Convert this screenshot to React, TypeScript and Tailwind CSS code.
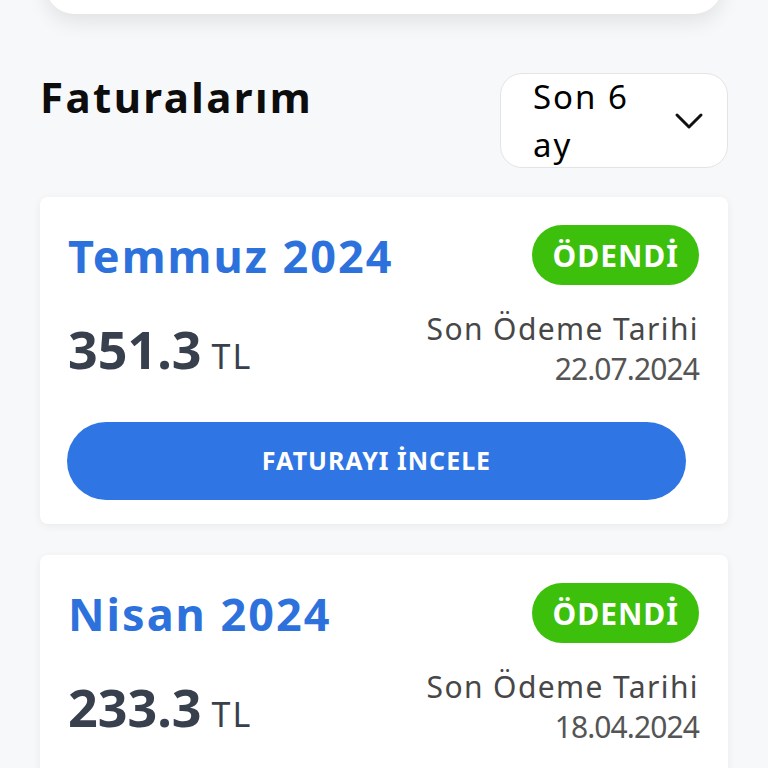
type Invoice = {
  month: string;
  amount: string;
  dueDate: string;
};

const invoices: Invoice[] = [
  { month: "Temmuz 2024", amount: "351.3", dueDate: "22.07.2024" },
  { month: "Nisan 2024", amount: "233.3", dueDate: "18.04.2024" },
];

const InvoiceCard = ({ invoice }: { invoice: Invoice }) => {
  return (
    <div className="bg-white rounded-[8px] shadow-[0_2px_8px_rgba(0,0,0,0.06)] px-[28px] pt-[28px] pb-[24px]">
      {/* Title + status */}
      <div className="flex items-center justify-between pr-[1px]">
        <h3 className="text-[45px] font-bold text-[#2d72dc] leading-none tracking-[2px]">
          {invoice.month}
        </h3>
        <span className="h-[60px] px-[20px] rounded-full bg-[#3cc00b] text-white text-[30px] font-bold tracking-[1px] flex items-center">
          ÖDENDİ
        </span>
      </div>

      {/* Amount + due date */}
      <div className="flex items-center justify-between mt-[24px] pr-[1px]">
        <div className="flex items-baseline gap-[10px] text-[#383f4d]">
          <span className="text-[52px] font-bold">{invoice.amount}</span>
          <span className="text-[34px] tracking-[2px]">TL</span>
        </div>
        <div className="text-right text-[30px] leading-[40px] text-[#474747]">
          <p className="tracking-[1.4px]">Son Ödeme Tarihi</p>
          <p className="text-[#555] tracking-[-0.9px]">{invoice.dueDate}</p>
        </div>
      </div>

      <button className="mt-[33px] w-[619px] h-[78px] rounded-full bg-[#2f76e4] text-white text-[25px] font-bold tracking-[1px] -ml-[1px]">
        FATURAYI İNCELE
      </button>
    </div>
  );
};

export default function App() {
  return (
    <div
      className="h-[768px] overflow-hidden bg-[#f7f8fa]"
      style={{ fontFamily: '"Noto Sans", "Open Sans", sans-serif' }}
    >
      {/* Previous section card (cut off at top) */}
      <div className="mx-[46px] h-[100px] -mt-[86px] bg-white rounded-[28px] shadow-[0_8px_20px_rgba(0,0,0,0.09)]" />

      {/* Header */}
      <div className="flex items-start justify-between px-[40px] mt-[59px]">
        <h2 className="text-[42px] font-bold text-[#0d0d0d] leading-[48px] tracking-[2.4px]">Faturalarım</h2>
        <button className="w-[228px] h-[95px] bg-white border border-[#e2e4e8] rounded-[22px] flex items-center justify-between pl-[32px] pr-[22px] text-left">
          <span className="text-[33px] leading-[48px] text-black tracking-[2px] w-[120px]">Son 6 ay</span>
          <svg width="30" height="18" viewBox="0 0 30 18" fill="none" className="mr-[1px]">
            <polyline
              points="3,3 15,15 27,3"
              stroke="#111"
              strokeWidth="3"
              strokeLinecap="round"
              strokeLinejoin="round"
            />
          </svg>
        </button>
      </div>

      {/* Invoices */}
      <div className="flex flex-col gap-[31px] px-[40px] mt-[29px]">
        {invoices.map((inv) => (
          <InvoiceCard key={inv.month} invoice={inv} />
        ))}
      </div>
    </div>
  );
}
